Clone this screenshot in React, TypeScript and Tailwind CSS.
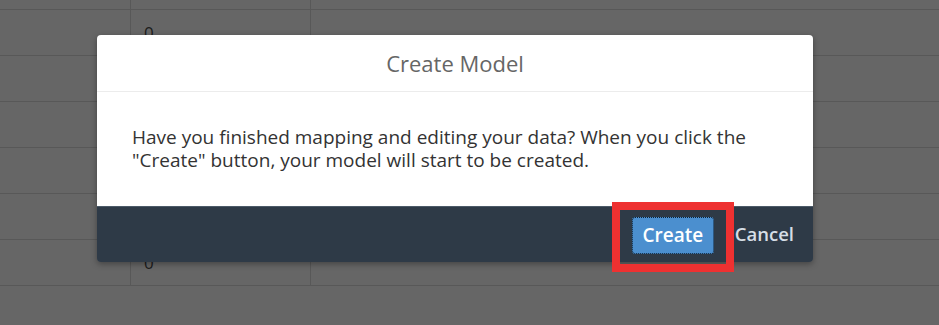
import React from 'react';

// Rows of the table behind the dimmed overlay
const rows = [
  { value: '', h: 'h-[10px]' },
  { value: '0', h: 'h-[46px]' },
  { value: '', h: 'h-[46px]' },
  { value: '', h: 'h-[46px]' },
  { value: '', h: 'h-[46px]' },
  { value: '0', h: 'h-[46px]' },
  { value: '0', h: 'h-[46px]' },
];

const App: React.FC = () => {
  return (
    <main className="relative w-[939px] h-[325px] overflow-hidden bg-[#666666] font-['Open_Sans',sans-serif]">
      {/* Background sheet */}
      <div className="flex flex-col">
        {rows.map((row, index) => (
          <div key={index} className={`flex ${row.h} border-b border-[#585858]`}>
            <div className="w-[131px] border-r border-[#585858]" />
            <div className="w-[180px] border-r border-[#585858] flex items-center pl-[13px] text-[17px] text-[#1c1c1c]">
              {row.value}
            </div>
            <div className="flex-1" />
          </div>
        ))}
      </div>

      {/* Dialog */}
      <div className="absolute left-[97px] top-[35px] w-[716px] rounded-[4px] shadow-[0_2px_6px_rgba(0,0,0,0.35)]">
        <header className="h-[57px] bg-white rounded-t-[4px] border-b border-[#ececec] flex items-center justify-center">
          <h1 className="text-[22px] text-[#666666]">Create Model</h1>
        </header>
        <section className="h-[114px] bg-white px-[35px] pt-[34px] text-[19px] leading-[23px] text-[#333333] whitespace-nowrap">
          <p>
            Have you finished mapping and editing your data? When you click the
            <br />
            "Create" button, your model will start to be created.
          </p>
        </section>
        <footer className="h-[56px] bg-[#2e3a47] rounded-b-[4px] border-t border-[#4c5a68] flex items-start justify-end pr-[19px]">
          {/* Highlight frame around the primary action */}
          <div className="-mt-[5px] w-[122px] h-[70px] border-[8px] border-[#ee3131] pl-[12px] pt-[7px]">
            <button className="h-[37px] w-[82px] rounded-[3px] bg-[#4b8fcf] border border-dotted border-[#0f2336] text-white text-[19px] font-semibold leading-none">
              Create
            </button>
          </div>
          <button className="ml-[1px] mt-[12px] text-[18.5px] leading-[30px] text-[#d6dee6] font-semibold">
            Cancel
          </button>
        </footer>
      </div>
    </main>
  );
};

export default App;
